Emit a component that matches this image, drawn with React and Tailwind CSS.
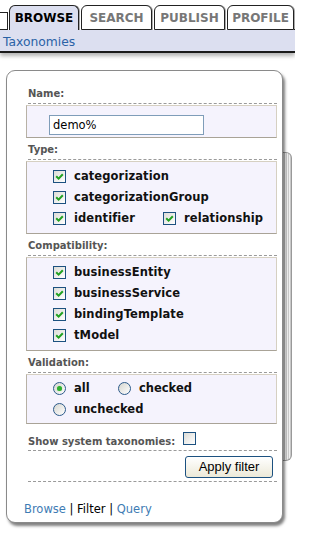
import React from 'react';

const tabs = [
    { label: 'BROWSE', w: 'w-[70px]', active: true },
    { label: 'SEARCH', w: 'w-[71px]' },
    { label: 'PUBLISH', w: 'w-[71px]' },
    { label: 'PROFILE', w: 'w-[67px]' },
];

const typeRows = [['categorization'], ['categorizationGroup'], ['identifier', 'relationship']];
const compatRows = [['businessEntity'], ['businessService'], ['bindingTemplate'], ['tModel']];

function CheckBox({ checked }) {
    return (
        <span className="w-[13px] h-[13px] shrink-0 border border-[#1c5180] bg-linear-to-br from-[#dcdcd7] to-white flex items-center justify-center">
            {checked && (
                <svg width="9" height="9" viewBox="0 0 9 9">
                    <path d="M1.2 4.2 L3.6 6.6 L7.8 2.2" stroke="#21a121" strokeWidth="2" fill="none" />
                </svg>
            )}
        </span>
    );
}

function Radio({ checked }) {
    return (
        <span className="w-[13px] h-[13px] shrink-0 rounded-full border border-[#2c5a8a] bg-linear-to-br from-[#d6d6d0] to-white flex items-center justify-center">
            {checked && <span className="w-[5px] h-[5px] rounded-full bg-[#2fb02f] shadow-[0_0_1px_#7fd07f]" />}
        </span>
    );
}

function Label({ children }) {
    return (
        <div className="ml-[2px] pb-[3px] border-b border-dashed border-[#9a9a9a] text-[10px] leading-[12px] font-bold text-[#555]">
            {children}
        </div>
    );
}

function Box({ children, className = '' }) {
    return (
        <div className={`mt-[1px] bg-[#f5f3fd] border border-[#d6d0c2] border-b-[#a9a397] border-l-[#b8b2a6] ${className}`}>
            {children}
        </div>
    );
}

function CheckRows({ rows }) {
    return (
        <div className="py-[4px] pl-[26px]">
            {rows.map((row, i) => (
                <div key={i} className="h-[21px] flex items-center">
                    {row.map((item, j) => (
                        <div key={j} className={`flex items-center gap-[8px] ${row.length > 1 && j === 0 ? 'w-[110px]' : ''}`}>
                            <CheckBox checked />
                            <span className="text-[11.5px] font-bold text-[#111] tracking-[0.1px]">{item}</span>
                        </div>
                    ))}
                </div>
            ))}
        </div>
    );
}

export default function App() {
    return (
        <div className="w-[295px] h-[537px] bg-white overflow-hidden font-['DejaVu_Sans',sans-serif]">
            {/* tabs */}
            <div className="flex items-end h-[30px]">
                <div className="w-[8px] h-[18px] border-t border-r border-b border-[#222] bg-white" />
                {tabs.map((t, i) => (
                    <div
                        key={i}
                        className={`${t.w} ${i > 0 ? 'ml-[2px]' : 'ml-[1px]'} h-[25px] rounded-t-[6px] border border-[#222] shadow-[1px_0_0_#aaa] flex items-center justify-center text-[12px] font-bold ${t.active ? 'bg-[#dcdff0] border-b-0 text-black' : 'bg-white text-[#777]'}`}
                    >
                        {t.label}
                    </div>
                ))}
                <div className="flex-1 border-b border-[#222]" />
            </div>

            {/* sub bar */}
            <div className="h-[23px] bg-[#dcdff0] border-b-2 border-[#1a1a1a] shadow-[0_3px_4px_rgba(0,0,0,0.3)] flex items-center pl-[3px] pt-[4px]">
                <span className="text-[12.3px] text-[#2a62a6]">Taxonomies</span>
            </div>

            {/* content */}
            <div className="flex items-start pl-[6px] pt-[17px]">
                <div className="relative z-10 w-[277px] h-[453px] bg-white border border-[#8a8a8a] rounded-[9px] shadow-[2px_3px_3px_rgba(0,0,0,0.5)] pt-[17px] pl-[19px] pr-[5px] flex flex-col">
                    <Label>Name:</Label>
                    <Box className="h-[33px] pt-[6px] pl-[22px]">
                        <input
                            defaultValue="demo%"
                            className="w-[155px] h-[20px] border border-[#7f9db9] bg-white px-[3px] text-[11.5px] text-black outline-none font-['DejaVu_Sans',sans-serif]"
                        />
                    </Box>

                    <div className="mt-[6px]"><Label>Type:</Label></div>
                    <Box><CheckRows rows={typeRows} /></Box>

                    <div className="mt-[6px]"><Label>Compatibility:</Label></div>
                    <Box><CheckRows rows={compatRows} /></Box>

                    <div className="mt-[6px]"><Label>Validation:</Label></div>
                    <Box className="py-[3px] pl-[26px]">
                        <div className="h-[21px] flex items-center">
                            <div className="w-[65px] flex items-center gap-[8px]">
                                <Radio checked />
                                <span className="text-[11.5px] font-bold text-[#111]">all</span>
                            </div>
                            <div className="flex items-center gap-[8px]">
                                <Radio />
                                <span className="text-[11.5px] font-bold text-[#111]">checked</span>
                            </div>
                        </div>
                        <div className="h-[21px] flex items-center gap-[8px]">
                            <Radio />
                            <span className="text-[11.5px] font-bold text-[#111]">unchecked</span>
                        </div>
                    </Box>

                    <div className="mt-[8px] ml-[2px] flex items-end gap-[8px] pb-[2px] border-b border-dashed border-[#9a9a9a]">
                        <span className="text-[10px] leading-[12px] font-bold text-[#555]">Show system taxonomies:</span>
                        <span className="mb-[3px]"><CheckBox /></span>
                    </div>

                    <div className="mt-[5px] ml-[2px] flex justify-end pr-[4px] pb-[3px] border-b border-dashed border-[#9a9a9a]">
                        <button className="w-[88px] h-[22px] rounded-[3px] border border-[#1c5180] bg-linear-to-b from-white to-[#ece9d8] text-[13px] text-black font-['Liberation_Sans',Arial,sans-serif]">
                            Apply filter
                        </button>
                    </div>

                    <div className="mt-[20px] ml-[-2px] text-[11.5px] leading-[14px] text-black">
                        <span className="text-[#3e7cb4]">Browse</span> | Filter | <span className="text-[#3e7cb4]">Query</span>
                    </div>
                </div>

                {/* panel behind */}
                <div className="mt-[82px] ml-[-1px] w-[10px] h-[309px] rounded-r-[6px] border border-l-0 border-[#999] bg-[repeating-linear-gradient(90deg,#c8c8c8_0px,#c8c8c8_1px,#f0f0f0_1px,#f0f0f0_2px)]" />
            </div>
        </div>
    );
}
